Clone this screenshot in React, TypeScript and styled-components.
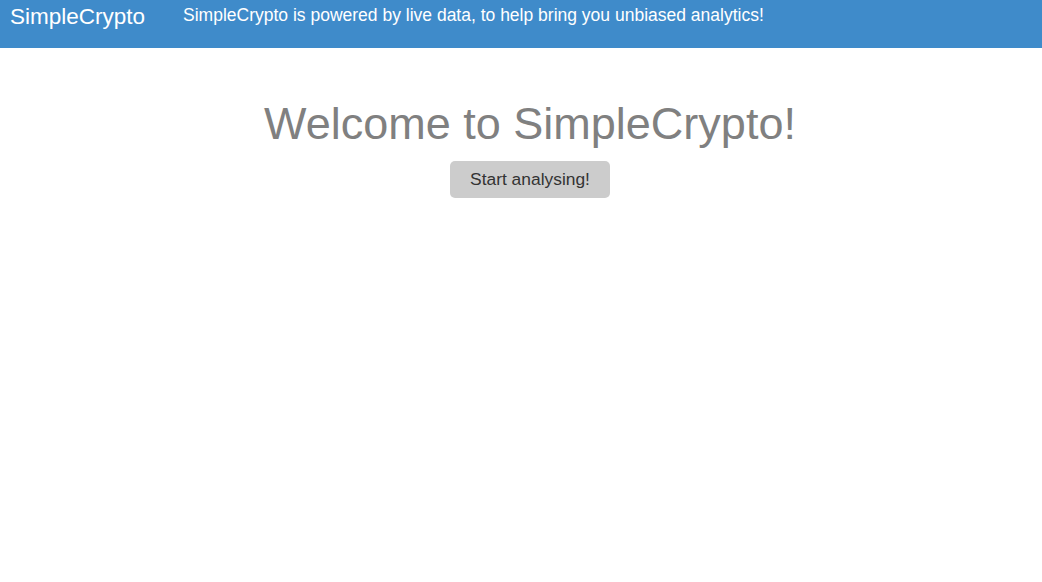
import React from "react";
import styled, { createGlobalStyle } from "styled-components";

const Global = createGlobalStyle`
  html, body { margin: 0; padding: 0; background: #fff; }
  body { font-family: "Liberation Sans", Arial, sans-serif; }
`;

const Header = styled.header`
  height: 48px;
  background: #3f8bca;
  display: flex;
  align-items: flex-start;
  box-sizing: border-box;
  padding: 3px 0 0 10px;
  color: #fff;
`;

const Brand = styled.div`
  font-size: 22.5px;
  line-height: 28px;
  margin-right: 38px;
`;

const Tagline = styled.div`
  font-size: 17.5px;
  line-height: 24px;
`;

const Main = styled.main`
  display: flex;
  flex-direction: column;
  align-items: center;
  padding: 46px 0 0 18px;
`;

const Title = styled.h1`
  margin: 0;
  font-weight: normal;
  font-size: 45px;
  line-height: 60px;
  color: #808080;
`;

const StartButton = styled.button`
  margin-top: 7px;
  height: 37px;
  padding: 0 20px;
  border: none;
  border-radius: 5px;
  background: #cccccc;
  color: #333;
  font-family: "Liberation Sans", Arial, sans-serif;
  font-size: 17.4px;
  cursor: pointer;
`;

export default function App() {
  return (
    <>
      <Global />
      <Header>
        <Brand>SimpleCrypto</Brand>
        <Tagline>SimpleCrypto is powered by live data, to help bring you unbiased analytics!</Tagline>
      </Header>
      <Main>
        <Title>Welcome to SimpleCrypto!</Title>
        <StartButton>Start analysing!</StartButton>
      </Main>
    </>
  );
}
